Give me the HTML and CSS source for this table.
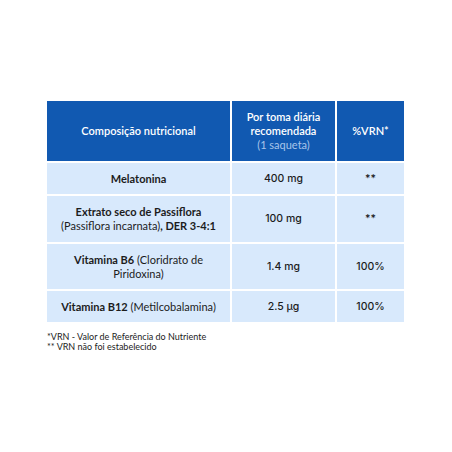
FILE: index.html
```html
<!DOCTYPE html>
<html lang="pt">
<head>
<meta charset="utf-8">
<title>Composição nutricional</title>
<link rel="stylesheet" href="styles.css">
</head>
<body>
<main class="page">
  <div class="table">
    <div class="cell head"><span>Composição nutricional</span></div>
    <div class="cell head"><span>Por toma diária<br>recomendada<br><span class="sub">(1 saqueta)</span></span></div>
    <div class="cell head"><span>%VRN*</span></div>

    <div class="cell name"><span><b>Melatonina</b></span></div>
    <div class="cell num"><span>400 mg</span></div>
    <div class="cell num"><span>**</span></div>

    <div class="cell name"><span><b>Extrato seco de Passiflora</b><br>(Passiflora incarnata)<b>, DER 3-4:1</b></span></div>
    <div class="cell num"><span>100 mg</span></div>
    <div class="cell num"><span>**</span></div>

    <div class="cell name"><span><b>Vitamina B6</b> (Cloridrato de<br>Piridoxina)</span></div>
    <div class="cell num"><span>1.4 mg</span></div>
    <div class="cell num"><span>100%</span></div>

    <div class="cell name"><span><b>Vitamina B12</b> (Metilcobalamina)</span></div>
    <div class="cell num"><span>2.5 µg</span></div>
    <div class="cell num"><span>100%</span></div>
  </div>
  <div class="notes">
    <p>*VRN - Valor de Referência do Nutriente</p>
    <p>** VRN não foi estabelecido</p>
  </div>
</main>
</body>
</html>
```
FILE: styles.css
```css
html, body {
  margin: 0;
  padding: 0;
  background: #ffffff;
}
.page {
  padding: 101px 0 0 47px;
  font-family: "Lato", "Noto Sans", sans-serif;
  color: #1c1c1c;
}
.table {
  display: grid;
  grid-template-columns: 183px 103px 67px;
  grid-template-rows: 60px 31px 46px 45px 31px;
  gap: 2px;
  width: 357px;
}
.cell {
  display: flex;
  align-items: center;
  justify-content: center;
  text-align: center;
  background: #d8e9fc;
  font-size: 11px;
  line-height: 14px;
  white-space: nowrap;
}
.head {
  background: #1159b1;
  color: #ffffff;
  font-weight: 600;
}
.head .sub {
  color: #a9c5ea;
  font-weight: 400;
}
.name b {
  font-weight: 700;
}
.num {
  font-family: "Inter", "Liberation Sans", sans-serif;
  font-weight: 500;
  font-size: 10.5px;
}
.notes {
  margin-top: 10px;
  font-size: 9px;
  line-height: 10px;
}
.notes p {
  margin: 0;
}
```
